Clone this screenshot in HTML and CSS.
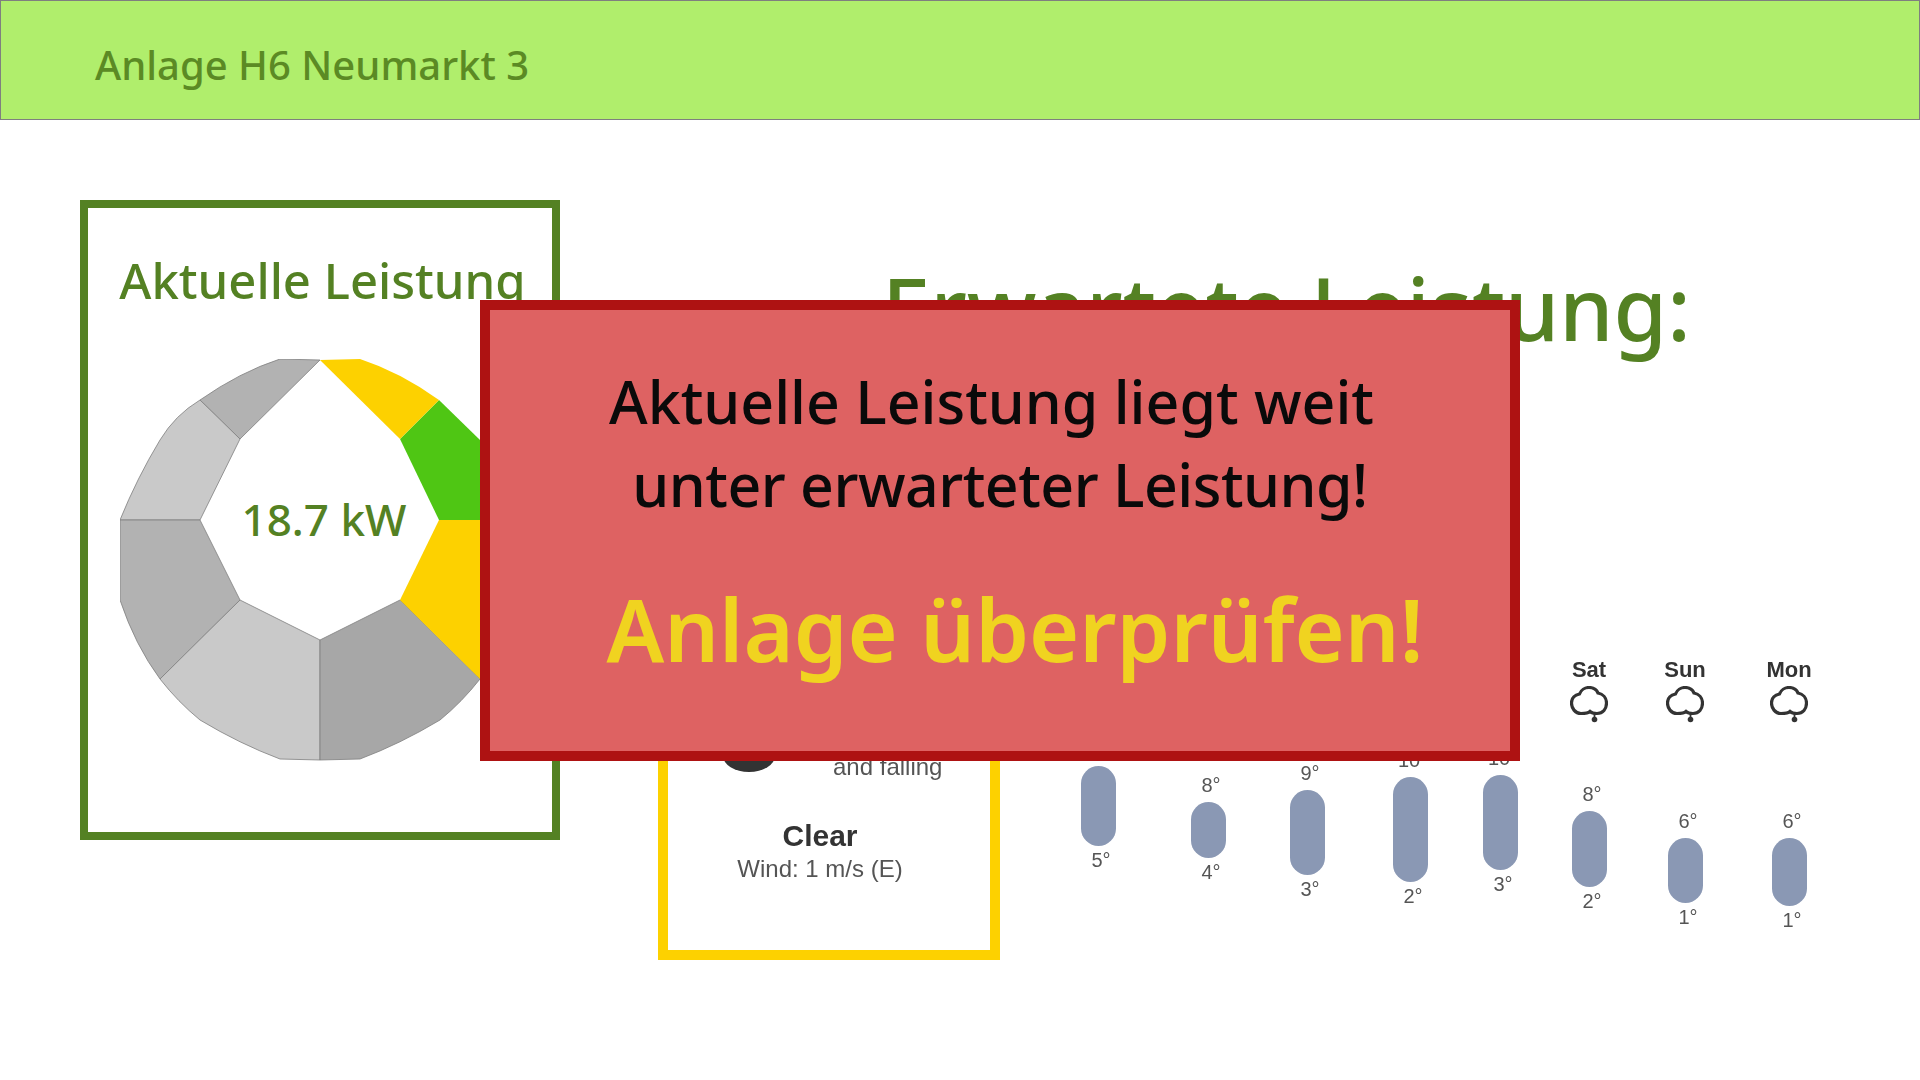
FILE: index.html
```html
<!DOCTYPE html>
<html lang="de">
<head>
    <meta charset="UTF-8">
    <meta name="viewport" content="width=device-width, initial-scale=1.0">
    <title>Anlage H6 Neumarkt 3</title>
    <link rel="stylesheet" href="styles.css">
</head>
<body>
    <svg class="defs" width="0" height="0">
        <symbol id="cloud" viewBox="0 0 38 38">
            <path d="M11 27.5 C5 27.5 1.5 22 1.5 17 C1.5 12 5 9 9.5 8 C11 4 15 1.5 19 1.5 C23 1.5 26.5 3.5 28 7 C33 8 36.5 12 36.5 17 C36.5 23 33 27.5 27 27.5 C24 27.5 21.5 27 20 25.5 C18.5 27 16 27.5 11 27.5 Z" fill="none" stroke="#333" stroke-width="3.2"/>
            <path d="M24.5 28 V32" stroke="#333" stroke-width="1.8"/>
            <circle cx="24.5" cy="33.5" r="2.8" fill="#333"/>
        </symbol>
    </svg>

    <header class="topbar">Anlage H6 Neumarkt 3</header>

    <main class="content">
        <section class="current">
            <h2>Aktuelle Leistung</h2>
            <div class="gauge">
                <svg width="400" height="402" viewBox="120 359 400 402">
                    <g stroke="#7f7f7f" stroke-width="0.8">
                        <path fill="#b2b2b2" d="M320 360 L280 359 Q240 372 200 400 L240 439 Z"/>
                        <path fill="#c9c9c9" d="M200 400 Q175 415 160 440 Q137 478 120 520 L200 520 L240 439 Z"/>
                        <path fill="#b2b2b2" d="M120 520 L120 600 Q135 645 160 679 L240 600 L200 520 Z"/>
                        <path fill="#c9c9c9" d="M160 679 Q178 702 200 720 Q240 744 280 759 L320 760 L320 640 L240 600 Z"/>
                        <path fill="#a7a7a7" d="M320 760 L360 759 Q400 744 440 720 Q462 702 480 679 L400 600 L320 640 Z"/>
                    </g>
                    <path fill="#fdd100" d="M400 600 L480 679 L520 600 L520 520 L439 520 Z"/>
                    <path fill="#4fc614" d="M439 520 L520 520 L480 440 L439 400 L400 439 Z"/>
                    <path fill="#fdd100" d="M320 360 L360 359 Q400 372 439 400 L400 439 Z"/>
                </svg>
                <span class="gauge-value">18.7 kW</span>
            </div>
        </section>

        <section class="expected">
            <h1>Erwartete Leistung:</h1>
            <div class="weather">
                <div class="today">
                    <div class="today-top">
                        <svg class="moon" width="52" height="32" viewBox="0 0 52 32"><ellipse cx="26" cy="16" rx="26" ry="16" fill="#333"/></svg>
                        <span class="trend">and falling</span>
                    </div>
                    <div class="sky">Clear</div>
                    <div class="wind">Wind: 1 m/s (E)</div>
                </div>
                <div class="forecast">
                    <div class="day">
                        <div class="day-name"></div>
                        <svg class="cloud"><use href="#cloud"/></svg>
                        <div class="temp" style="margin-top: 12px"></div>
                        <div class="bar" style="height: 80px"></div>
                        <div class="temp temp-low">5°</div>
                    </div>
                    <div class="day">
                        <div class="day-name"></div>
                        <svg class="cloud"><use href="#cloud"/></svg>
                        <div class="temp" style="margin-top: 48px">8°</div>
                        <div class="bar" style="height: 56px"></div>
                        <div class="temp temp-low">4°</div>
                    </div>
                    <div class="day">
                        <div class="day-name"></div>
                        <svg class="cloud"><use href="#cloud"/></svg>
                        <div class="temp" style="margin-top: 36px">9°</div>
                        <div class="bar" style="height: 85px"></div>
                        <div class="temp temp-low">3°</div>
                    </div>
                    <div class="day">
                        <div class="day-name"></div>
                        <svg class="cloud"><use href="#cloud"/></svg>
                        <div class="temp" style="margin-top: 23px">10°</div>
                        <div class="bar" style="height: 105px"></div>
                        <div class="temp temp-low">2°</div>
                    </div>
                    <div class="day">
                        <div class="day-name"></div>
                        <svg class="cloud"><use href="#cloud"/></svg>
                        <div class="temp" style="margin-top: 21px">10°</div>
                        <div class="bar" style="height: 95px"></div>
                        <div class="temp temp-low">3°</div>
                    </div>
                    <div class="day">
                        <div class="day-name">Sat</div>
                        <svg class="cloud"><use href="#cloud"/></svg>
                        <div class="temp" style="margin-top: 57px">8°</div>
                        <div class="bar" style="height: 76px"></div>
                        <div class="temp temp-low">2°</div>
                    </div>
                    <div class="day">
                        <div class="day-name">Sun</div>
                        <svg class="cloud"><use href="#cloud"/></svg>
                        <div class="temp" style="margin-top: 84px">6°</div>
                        <div class="bar" style="height: 65px"></div>
                        <div class="temp temp-low">1°</div>
                    </div>
                    <div class="day">
                        <div class="day-name">Mon</div>
                        <svg class="cloud"><use href="#cloud"/></svg>
                        <div class="temp" style="margin-top: 84px">6°</div>
                        <div class="bar" style="height: 68px"></div>
                        <div class="temp temp-low">1°</div>
                    </div>
                </div>
            </div>
        </section>
    </main>

    <div class="alert">
        <p class="alert-text">
            <span class="line-one">Aktuelle Leistung liegt weit</span>
            <span class="line-two">unter erwarteter Leistung!</span>
        </p>
        <p class="alert-action">Anlage überprüfen!</p>
    </div>
</body>
</html>
```

FILE: styles.css
```css
body {
    font-family: "Noto Sans", "Open Sans", sans-serif;
    background-color: #fff;
    margin: 0;
    width: 1920px;
    height: 1080px;
    overflow: hidden;
    position: relative;
}
.defs {
    position: absolute;
}
.topbar {
    box-sizing: border-box;
    height: 120px;
    padding: 9px 0 0 94px;
    display: flex;
    align-items: center;
    background-color: #b0ee6c;
    border: 1px solid #7f7f7f;
    color: #5b8a24;
    font-size: 40px;
    font-weight: 500;
}
.content {
    display: flex;
    padding: 80px 0 0 80px;
}
.current {
    box-sizing: border-box;
    width: 480px;
    height: 640px;
    border: 8px solid #548123;
    padding: 41px 0 0 0;
    color: #548123;
    text-align: center;
}
.current h2 {
    margin: 0;
    padding-left: 5px;
    font-size: 49px;
    font-weight: 500;
    line-height: 62px;
}
.gauge {
    position: relative;
    width: 400px;
    margin: 48px 0 0 32px;
    line-height: 0;
}
.gauge-value {
    position: absolute;
    left: 0;
    right: -8px;
    top: 130px;
    font-size: 44px;
    font-weight: 500;
    line-height: 60px;
}
.expected {
    margin-left: 98px;
}
.expected h1 {
    margin: 48px 0 0 224px;
    color: #548123;
    font-size: 86.5px;
    font-weight: 500;
    line-height: 120px;
    white-space: nowrap;
}
.weather {
    display: flex;
    margin-top: 252px;
    font-family: "Liberation Sans", Arial, sans-serif;
    color: #555;
    filter: blur(0.5px);
}
.today {
    box-sizing: border-box;
    width: 342px;
    height: 340px;
    border: 10px solid #fdd100;
    padding: 58px 18px 0 0;
    text-align: center;
}
.today-top {
    display: flex;
    align-items: flex-end;
    height: 93px;
    text-align: left;
}
.moon {
    margin: 0 0 9px 55px;
}
.trend {
    margin: 0 0 1px 58px;
    font-size: 24px;
    line-height: 26px;
}
.sky {
    margin-top: 37px;
    color: #333;
    font-size: 30px;
    font-weight: 700;
    line-height: 36px;
}
.wind {
    font-size: 24px;
    line-height: 30px;
}
.forecast {
    display: grid;
    grid-template-columns: 110px 110px 88px 118px 62px 116px 76px 132px;
    margin-left: 43px;
    padding-top: 37px;
    text-align: center;
}
.day {
    display: flex;
    flex-direction: column;
    align-items: center;
}
.day-name {
    height: 26px;
    color: #333;
    font-size: 22px;
    font-weight: 700;
    line-height: 26px;
}
.cloud {
    width: 38px;
    height: 38px;
    margin-top: 3px;
}
.temp {
    min-height: 26px;
    padding-left: 6px;
    font-size: 20px;
    line-height: 26px;
}
.temp-low {
    margin-top: 1px;
}
.bar {
    width: 35px;
    margin-top: 4px;
    background-color: #8a98b4;
    border-radius: 18px;
}
.alert {
    position: absolute;
    left: 480px;
    top: 300px;
    box-sizing: border-box;
    width: 1040px;
    height: 461px;
    padding-top: 50px;
    background-color: #de6262;
    border: 10px solid #ae1212;
    text-align: center;
}
.alert-text {
    margin: 0;
    color: #0a0a0a;
    font-size: 59px;
    font-weight: 500;
    line-height: 83px;
}
.alert-text span {
    display: block;
}
.alert-text .line-one {
    padding-right: 17px;
}
.alert-text .line-two {
    letter-spacing: -0.5px;
}
.alert-action {
    margin: 48px 0 0;
    padding-left: 30px;
    color: #f0d320;
    font-size: 86px;
    font-weight: 600;
    line-height: 110px;
}
```
